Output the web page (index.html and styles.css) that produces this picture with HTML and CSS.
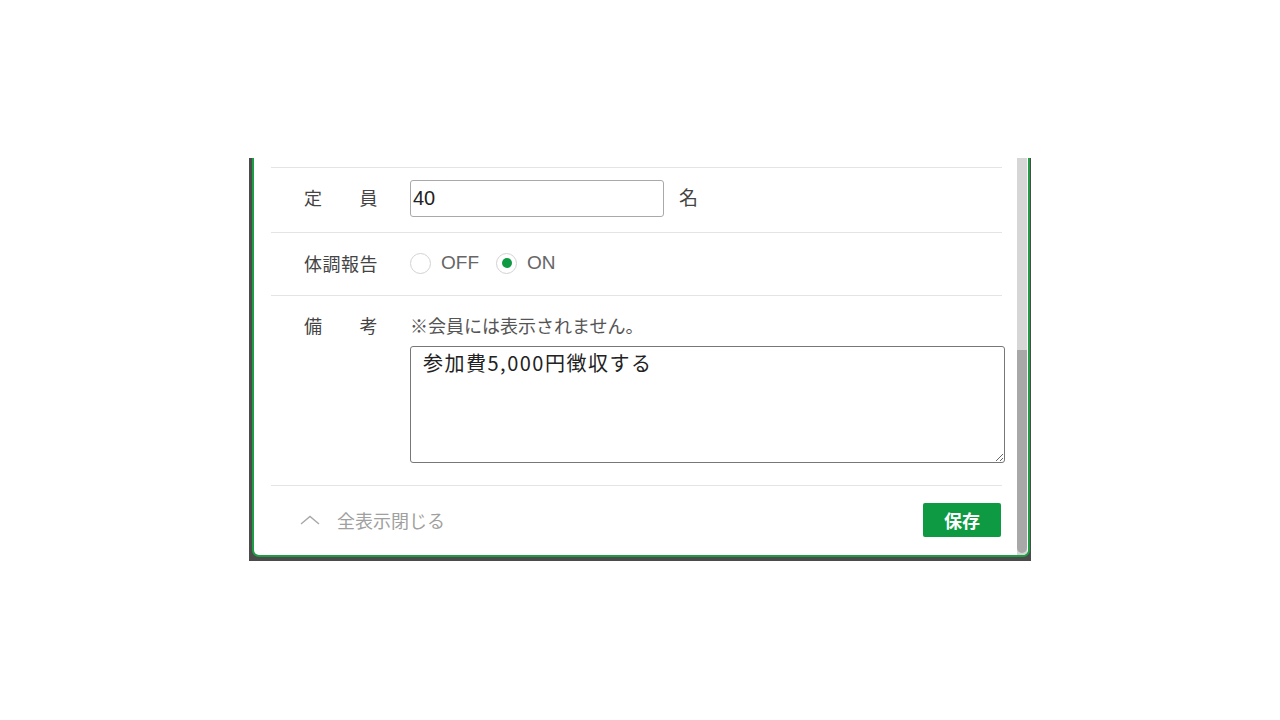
FILE: index.html
```html
<!DOCTYPE html>
<html lang="ja">
  <head>
    <meta charset="UTF-8" />
    <meta name="viewport" content="width=device-width, initial-scale=1.0" />
    <title>イベント編集</title>
    <link rel="stylesheet" href="styles.css">
  </head>
  <body>
    <div class="overlay">
      <div class="dialog">
        <div class="form">
          <div class="row row-capacity">
            <div class="label">定　　員</div>
            <div class="field">
              <input type="text" class="text-input" value="40" />
              <span class="unit">名</span>
            </div>
          </div>

          <div class="row row-health">
            <div class="label">体調報告</div>
            <div class="field radios">
              <label class="radio"><input type="radio" name="health" /> <span>OFF</span></label>
              <label class="radio"><input type="radio" name="health" checked /> <span>ON</span></label>
            </div>
          </div>

          <div class="row row-note">
            <div class="label">備　　考</div>
            <div class="field note-field">
              <div class="note">※会員には表示されません。</div>
              <textarea class="note-text">参加費5,000円徴収する</textarea>
            </div>
          </div>

          <div class="footer">
            <button class="collapse">
              <svg width="20" height="10" viewBox="0 0 20 10"><path d="M1 9 L10 1.5 L19 9" fill="none" stroke="#a8a8a8" stroke-width="1.4" /></svg>
              <span>全表示閉じる</span>
            </button>
            <button class="save">保存</button>
          </div>
        </div>
        <div class="scrollbar">
          <div class="thumb"></div>
        </div>
      </div>
    </div>
  </body>
</html>
```

FILE: styles.css
```css
:root {
  --green: #1f9d45;
  --btn-green: #0e9a42;
  --line: #e4e4e4;
  --label: #444;
}

body {
  margin: 0;
  background: #ffffff;
  font-family: "Noto Sans CJK JP", "Liberation Sans", sans-serif;
  color: var(--label);
}

.overlay {
  margin: 158px 0 0 249px;
  width: 782px;
  height: 403px;
  box-sizing: border-box;
  padding: 0 1px 4px 3px;
  background: #4b4b4b;
}

.dialog {
  height: 100%;
  box-sizing: border-box;
  display: flex;
  background: #fff;
  border: 2px solid var(--green);
  border-top: none;
  border-radius: 0 0 7px 7px;
  overflow: hidden;
}

.form {
  flex: 1;
  min-width: 0;
  padding: 9px 15px 0 17px;
}

.row {
  display: flex;
  border-top: 1px solid var(--line);
}

.label {
  width: 106px;
  margin-left: 33px;
  font-size: 18px;
  letter-spacing: 0.5px;
  line-height: 26px;
  color: var(--label);
  flex-shrink: 0;
}

.field {
  display: flex;
  align-items: center;
}

.row-capacity {
  align-items: center;
  padding: 12px 0 15px;
}

.row-capacity .label {
  margin-top: -3px;
}

.text-input {
  width: 254px;
  height: 37px;
  box-sizing: border-box;
  border: 1px solid #a9a9a9;
  border-radius: 3px;
  padding: 0 2px;
  font-family: "Liberation Sans", sans-serif;
  font-size: 20px;
  color: #222;
  outline: none;
}

.unit {
  margin-left: 15px;
  margin-top: -5px;
  font-size: 19px;
}

.row-health {
  align-items: center;
  padding: 17px 0 19px;
}

.radios {
  gap: 17px;
}

.radio {
  display: flex;
  align-items: center;
  gap: 10px;
  font-family: "Liberation Sans", sans-serif;
  font-size: 19px;
  line-height: 24px;
  color: #666;
}

.radio input {
  appearance: none;
  margin: 0;
  width: 21px;
  height: 21px;
  border: 1px solid #d2d2d2;
  border-radius: 50%;
  background: #fff;
  display: grid;
  place-items: center;
}

.radio input:checked::after {
  content: "";
  width: 10px;
  height: 10px;
  border-radius: 50%;
  background: var(--btn-green);
}

.row-note {
  padding: 16px 0 22px;
  align-items: flex-start;
}

.note-field {
  flex-direction: column;
  align-items: flex-start;
}

.note {
  font-size: 18px;
  line-height: 26px;
  color: #555;
  margin-bottom: 8px;
}

.note-text {
  width: 595px;
  height: 117px;
  box-sizing: border-box;
  margin: 0;
  padding: 2px 12px;
  border: 1px solid #777;
  border-radius: 3px;
  font-family: "Noto Sans CJK JP", sans-serif;
  font-size: 20px;
  letter-spacing: 1.5px;
  line-height: 28px;
  color: #222;
  outline: none;
}

.footer {
  display: flex;
  justify-content: space-between;
  align-items: center;
  border-top: 1px solid var(--line);
  padding: 17px 1px 18px 0;
}

.collapse {
  display: flex;
  align-items: center;
  gap: 17px;
  margin-left: 29px;
  padding: 0;
  border: none;
  background: none;
  font-family: inherit;
  font-size: 18px;
  color: #a0a0a0;
  cursor: pointer;
}

.save {
  width: 78px;
  height: 34px;
  border: none;
  border-radius: 2px;
  background: var(--btn-green);
  color: #fff;
  font-family: inherit;
  font-size: 18px;
  font-weight: bold;
  cursor: pointer;
}

.scrollbar {
  width: 10px;
  margin-right: 1px;
  display: flex;
  flex-direction: column;
  background: #d6d6d6;
}

.thumb {
  flex: 1;
  margin-top: 192px;
  margin-bottom: 2px;
  background: #a8a8a8;
  border-radius: 0 0 5px 5px;
}
```
